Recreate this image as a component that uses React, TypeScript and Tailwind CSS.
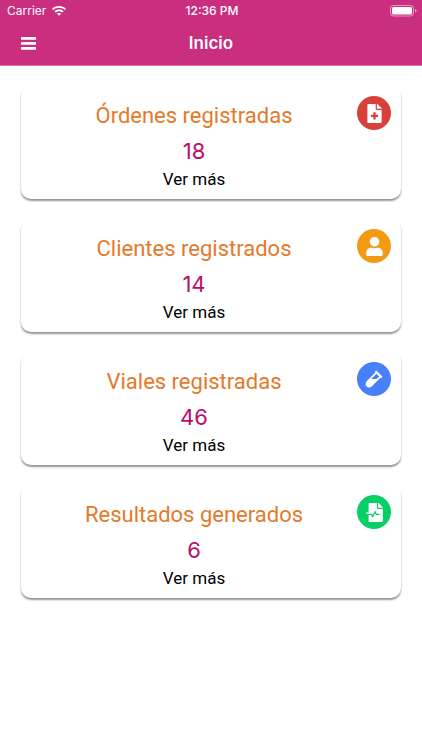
import { ReactNode } from "react";
import { FaFileMedical, FaFileMedicalAlt, FaUser, FaVial } from "react-icons/fa";

type SummaryCardProps = {
  title: string;
  count: number;
  icon: ReactNode;
  iconColor: string;
}

const SummaryCard: React.FC<SummaryCardProps> = ({ title, count, icon, iconColor }) => (
  <section className="flex items-start rounded-[10px] bg-white px-[10px] pt-[10px] pb-2 shadow-[0_2px_2px_rgba(0,0,0,0.42)]">
    <div className="flex flex-1 flex-col items-center pt-1 font-['Roboto','Inter',sans-serif]">
      <h2 className="text-[22px] leading-8 text-[#e37a2a]">{title}</h2>
      <p className="pt-[2px] font-['Inter',sans-serif] text-[22px] leading-[34px] text-[#ba0c6c]">{count}</p>
      <a href="#" className="text-[17px] leading-[23px] text-black">Ver más</a>
    </div>
    <span className={`flex size-[34px] shrink-0 items-center justify-center rounded-full text-white ${iconColor}`}>
      {icon}
    </span>
  </section>
)

const MenuIcon = () => (
  <svg viewBox="0 0 15 13" className="h-[13px] w-[15px]" fill="currentColor">
    <rect width="15" height="2.800" rx="0.500" />
    <rect y="5" width="15" height="2.800" rx="0.500" />
    <rect y="10" width="15" height="2.800" rx="0.500" />
  </svg>
)

const WifiIcon = () => (
  <svg viewBox="0 0 28 20" className="h-[10px] w-[14px]" fill="currentColor">
    <path d="M14 0c5.300 0 10.200 2 14 5.600l-2.600 2.700C22.300 5.400 18.300 3.700 14 3.700S5.700 5.400 2.600 8.300L0 5.600C3.800 2 8.700 0 14 0z" />
    <path d="M14 6.800c3.500 0 6.700 1.300 9.100 3.600l-2.700 2.700C18.700 11.500 16.500 10.600 14 10.600s-4.700.9-6.400 2.500l-2.700-2.700C7.300 8.100 10.500 6.800 14 6.800z" />
    <path d="M14 13.300c1.700 0 3.200.6 4.400 1.700L14 19.700 9.600 15c1.200-1.100 2.700-1.700 4.400-1.700z" />
  </svg>
)

const BatteryIcon = () => (
  <svg viewBox="0 0 27 12" className="h-3 w-[27px]">
    <rect x="0.500" y="0.500" width="23" height="10.500" rx="3" fill="none" stroke="#fff" strokeOpacity="0.500" />
    <rect x="2" y="2" width="20" height="7.500" rx="1.500" fill="#fff" />
    <path d="M25 4c1 .3 1.500 1 1.500 1.800S26 7.300 25 7.600z" fill="#fff" fillOpacity="0.500" />
  </svg>
)

const cards: SummaryCardProps[] = [
  { title: "Órdenes registradas", count: 18, icon: <FaFileMedical size={19} />, iconColor: "bg-[#d8403c]" },
  { title: "Clientes registrados", count: 14, icon: <FaUser size={19} />, iconColor: "bg-[#f29b12]" },
  { title: "Viales registradas", count: 46, icon: <FaVial size={18} />, iconColor: "bg-[#4680fa]" },
  { title: "Resultados generados", count: 6, icon: <FaFileMedicalAlt size={19} />, iconColor: "bg-[#06cf66]" },
]

const App = () => (
  <div className="min-h-screen bg-white font-['Inter','Liberation_Sans',sans-serif]">
    <header className="border-b border-[#dc74ab] bg-[#ca2e7f] text-white">
      <div className="grid h-[22px] grid-cols-3 items-center pl-[7px] pr-[5px] text-xs">
        <div className="flex items-center gap-[6px]">
          <span>Carrier</span>
          <WifiIcon />
        </div>
        <span className="text-center font-medium">12:36 PM</span>
        <div className="flex justify-end">
          <BatteryIcon />
        </div>
      </div>
      <div className="grid h-[43px] grid-cols-3 items-center px-[21px]">
        <button type="button" aria-label="Menú" className="justify-self-start">
          <MenuIcon />
        </button>
        <h1 className="text-center text-[17px] font-semibold">Inicio</h1>
      </div>
    </header>
    <main className="flex flex-col gap-5 px-[21px] pt-5">
      {cards.map((card) => (
        <SummaryCard key={card.title} {...card} />
      ))}
    </main>
  </div>
)

export default App;
